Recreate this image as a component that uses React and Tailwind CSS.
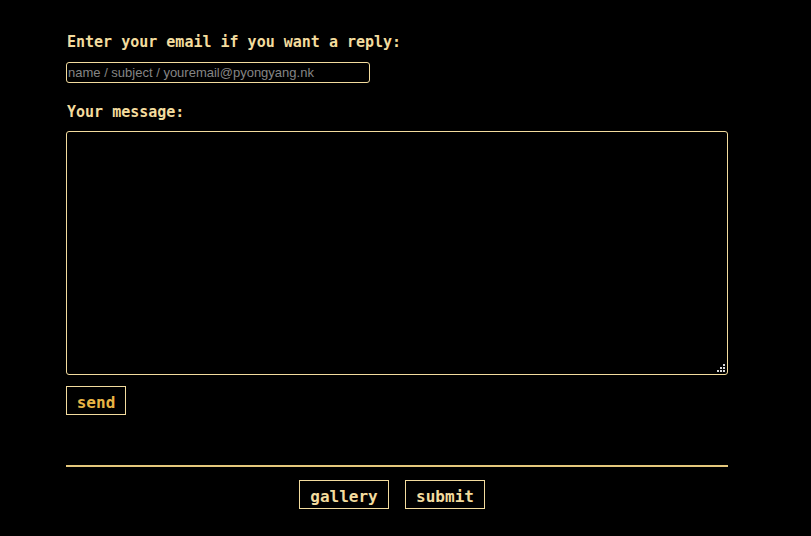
import { useState } from 'react'

const MONO = { fontFamily: '"DejaVu Sans Mono", "Liberation Mono", monospace' }

function Grip() {
  // little dotted resize corner like the old browser textarea grip
  const dots = [[6, 0], [3, 3], [6, 3], [0, 6], [3, 6], [6, 6]]
  return (
    <svg className="pointer-events-none absolute bottom-[3px] right-[3px]" width="8" height="8" viewBox="0 0 8 8">
      {dots.map(([x, y]) => (
        <rect key={`${x}-${y}`} x={x} y={y} width="2" height="2" fill="#d8d8d8" />
      ))}
    </svg>
  )
}

export default function App() {
  const [email, setEmail] = useState('')
  const [msg, setMsg] = useState('')

  return (
    <div className="min-h-[536px] w-full bg-black text-[#f3dc9e]" style={MONO}>
      <div className="ml-[66px] w-[662px] pt-[32px]">
        <label className="block text-[15px] font-bold leading-[20px] pl-[1px]">
          Enter your email if you want a reply:
        </label>
        <input
          value={email}
          onChange={e => setEmail(e.target.value)}
          placeholder="name / subject / youremail@pyongyang.nk"
          className="mt-[10px] block h-[21px] w-[304px] rounded-[3px] border border-[#f3dc9e] bg-black px-[1px] text-[13px] text-[#ccc] placeholder:text-[#858585] outline-none"
          style={{ fontFamily: '"Liberation Sans", Arial, sans-serif' }}
        />
        <label className="mt-[19px] block text-[15px] font-bold leading-[20px] pl-[1px]">
          Your message:
        </label>
        <div className="relative mt-[9px]">
          <textarea
            value={msg}
            onChange={e => setMsg(e.target.value)}
            className="block h-[244px] w-[662px] resize-none rounded-[3px] border border-[#f3dc9e] bg-black text-[13px] text-[#ccc] outline-none"
          />
          <Grip />
        </div>
        <button className="mt-[11px] block h-[29px] w-[60px] border border-[#f3dc9e] bg-black pt-[4px] text-[16px] font-bold leading-[20px] text-[#e9b545]">
          send
        </button>
        <div className="mt-[50px] h-[2px] w-full bg-[#e4c77c]" />
        <div className="mt-[13px] flex justify-center gap-[16px] pr-[10px]">
          <button className="h-[29px] w-[90px] border border-[#f3dc9e] bg-black pt-[4px] text-[16px] font-bold leading-[20px] text-[#f3dc9e]">
            gallery
          </button>
          <button className="h-[29px] w-[80px] border border-[#f3dc9e] bg-black pt-[4px] text-[16px] font-bold leading-[20px] text-[#f3dc9e]">
            submit
          </button>
        </div>
      </div>
    </div>
  )
}
